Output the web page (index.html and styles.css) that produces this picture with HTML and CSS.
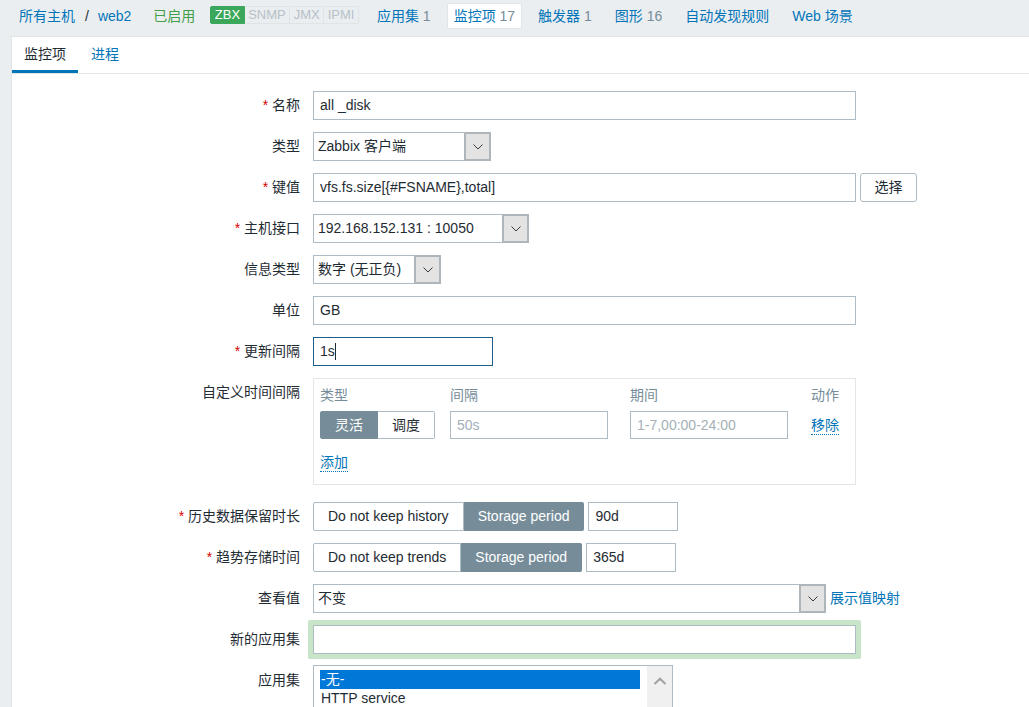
FILE: index.html
```html
<!DOCTYPE html>
<html lang="zh-CN">
<head>
<meta charset="utf-8">
<title>监控项</title>
<link rel="stylesheet" href="styles.css">
</head>
<body>
<header class="nav">
  <div class="crumbs"><a href="#">所有主机</a><span class="sep">/</span><a href="#">web2</a></div>
  <span class="status-on">已启用</span>
  <span class="badges"><span class="badge on">ZBX</span><span class="badge">SNMP</span><span class="badge">JMX</span><span class="badge">IPMI</span></span>
  <ul class="top-tabs">
    <li><a href="#">应用集</a> <span class="count">1</span></li>
    <li class="sel"><a href="#">监控项</a> <span class="count">17</span></li>
    <li><a href="#">触发器</a> <span class="count">1</span></li>
    <li><a href="#">图形</a> <span class="count">16</span></li>
    <li><a href="#">自动发现规则</a></li>
    <li><a href="#">Web 场景</a></li>
  </ul>
</header>
<main class="page">
  <ul class="tabs">
    <li class="active">监控项</li>
    <li><a href="#">进程</a></li>
  </ul>
  <div class="form">
    <div class="label req">名称</div>
    <div class="field"><div class="input wide">all _disk</div></div>

    <div class="label">类型</div>
    <div class="field"><div class="select w-type"><span class="val">Zabbix 客户端</span><span class="arrow"><svg width="10" height="6" viewBox="0 0 10 6"><path d="M0.5 0.5 L5 5 L9.5 0.5" fill="none" stroke="#3a3a3a" stroke-width="1"/></svg></span></div></div>

    <div class="label req">键值</div>
    <div class="field"><div class="input wide">vfs.fs.size[{#FSNAME},total]</div><span class="btn">选择</span></div>

    <div class="label req">主机接口</div>
    <div class="field"><div class="select w-iface"><span class="val">192.168.152.131 : 10050</span><span class="arrow"><svg width="10" height="6" viewBox="0 0 10 6"><path d="M0.5 0.5 L5 5 L9.5 0.5" fill="none" stroke="#3a3a3a" stroke-width="1"/></svg></span></div></div>

    <div class="label">信息类型</div>
    <div class="field"><div class="select w-info"><span class="val">数字 (无正负)</span><span class="arrow"><svg width="10" height="6" viewBox="0 0 10 6"><path d="M0.5 0.5 L5 5 L9.5 0.5" fill="none" stroke="#3a3a3a" stroke-width="1"/></svg></span></div></div>

    <div class="label">单位</div>
    <div class="field"><div class="input wide">GB</div></div>

    <div class="label req">更新间隔</div>
    <div class="field"><div class="input focus w-delay">1s<span class="caret"></span></div></div>

    <div class="label">自定义时间间隔</div>
    <div class="field"><div class="intervals">
      <div class="iv-grid">
        <div class="iv-head">类型</div>
        <div class="iv-head">间隔</div>
        <div class="iv-head">期间</div>
        <div class="iv-head">动作</div>
        <div class="iv-cell"><div class="seg small"><span class="on">灵活</span><span>调度</span></div></div>
        <div class="iv-cell"><div class="input iv-input ph">50s</div></div>
        <div class="iv-cell"><div class="input iv-input ph">1-7,00:00-24:00</div></div>
        <div class="iv-cell"><a href="#" class="dotted">移除</a></div>
      </div>
      <div class="iv-add"><a href="#" class="dotted">添加</a></div>
    </div></div>

    <div class="label req">历史数据保留时长</div>
    <div class="field"><div class="seg"><span>Do not keep history</span><span class="on">Storage period</span></div><div class="input w-period">90d</div></div>

    <div class="label req">趋势存储时间</div>
    <div class="field"><div class="seg"><span>Do not keep trends</span><span class="on">Storage period</span></div><div class="input w-period">365d</div></div>

    <div class="label">查看值</div>
    <div class="field"><div class="select w-valuemap"><span class="val">不变</span><span class="arrow"><svg width="10" height="6" viewBox="0 0 10 6"><path d="M0.5 0.5 L5 5 L9.5 0.5" fill="none" stroke="#3a3a3a" stroke-width="1"/></svg></span></div><a href="#" class="side-link">展示值映射</a></div>

    <div class="label">新的应用集</div>
    <div class="field"><div class="input wide glow"></div></div>

    <div class="label">应用集</div>
    <div class="field"><div class="listbox">
      <div class="options">
        <div class="opt selected">-无-</div>
        <div class="opt">HTTP service</div>
      </div>
      <div class="scroll"><svg width="14" height="8" viewBox="0 0 14 8"><path d="M1.5 7 L7 1.8 L12.5 7" fill="none" stroke="#a3a3a3" stroke-width="2.2"/></svg></div>
    </div></div>
  </div>
</main>
</body>
</html>
```
FILE: styles.css
```css
* { box-sizing: border-box; }
html, body { overflow: hidden; height: 100%; }
body {
  margin: 0;
  background: #ebeef1;
  font-family: "Liberation Sans", Arial, "Noto Sans CJK SC", sans-serif;
  font-size: 14px;
  color: #1f2c33;
}
a { color: #0275b8; text-decoration: none; }

/* top navigation */
.nav {
  height: 36px;
  display: flex;
  align-items: flex-start;
  padding-top: 3px;
  white-space: nowrap;
}
.crumbs { margin-left: 19px; display: flex; line-height: 26px; }
.sep { margin: 0 9px 0 10px; }
.status-on { margin-left: 22px; line-height: 26px; color: #429e47; }
.badges {
  margin-left: 15px;
  margin-top: 3px;
  display: flex;
  height: 18px;
  font-size: 13px;
  line-height: 16px;
}
.badge {
  padding: 0 3.5px;
  color: #b6c1c8;
  border: 1px solid #dfe4e7;
  border-left: none;
}
.badge.on {
  background: #3aa75a;
  border: 1px solid #3aa75a;
  color: #fff;
  border-radius: 2px 0 0 2px;
}
.badge:last-child { border-radius: 0 2px 2px 0; }
.top-tabs {
  list-style: none;
  margin: 0 0 0 11px;
  padding: 0;
  display: flex;
  gap: 9px;
}
.top-tabs li {
  height: 26px;
  line-height: 24px;
  padding: 0 6px;
  border: 1px solid transparent;
  border-radius: 2px;
}
.top-tabs li.sel { background: #fff; border-color: #dfe4e7; }
.count { color: #768d99; }

/* page */
.page {
  margin-left: 11px;
  height: calc(100% - 36px);
  background: #fff;
  border-left: 1px solid #dfe4e7;
  border-top: 1px solid #dfe4e7;
}
.tabs {
  list-style: none;
  margin: 0;
  padding: 0;
  display: flex;
  border-bottom: 1px solid #dfe4e7;
}
.tabs li {
  height: 36px;
  padding: 2px 12px 0;
  line-height: 31px;
  border-bottom: 3px solid transparent;
}
.tabs li.active { border-bottom-color: #0275b8; color: #1f2c33; }
.tabs li + li { padding-left: 13px; }

/* form */
.form {
  display: grid;
  grid-template-columns: 288px 1fr;
  column-gap: 13px;
  row-gap: 12px;
  padding-top: 17px;
}
.label { text-align: right; line-height: 29px; white-space: nowrap; }
.req::before { content: "* "; color: #d40000; }
.field { display: flex; align-items: flex-start; }

.input {
  height: 29px;
  border: 1px solid #acbbc4;
  background: #fff;
  padding: 0 6px;
  line-height: 27px;
  white-space: nowrap;
  overflow: hidden;
}
.wide { width: 543px; }
.w-delay { width: 180px; }
.w-period { width: 90px; margin-left: 4px; }
.focus { border-color: #1f5e8a; }
.caret {
  display: inline-block;
  width: 1px;
  height: 17px;
  background: #1f2c33;
  vertical-align: -4px;
}
.glow { box-shadow: 0 0 0 5px #c8e4c9; border-radius: 0.5px; }

.btn {
  margin-left: 4px;
  height: 29px;
  width: 57px;
  border: 1px solid #acbbc4;
  border-radius: 3px;
  text-align: center;
  line-height: 27px;
  background: #fff;
}

.select {
  display: flex;
  height: 29px;
  border: 1px solid #acbbc4;
  background: #fff;
}
.select .val { flex: 1; padding-left: 4px; line-height: 27px; white-space: nowrap; }
.select .arrow {
  width: 27px;
  margin: -1px -1px -1px 0;
  border: 2px solid #aeb6bb;
  background: #e3e3e3;
  display: flex;
  align-items: center;
  justify-content: center;
}
.w-type { width: 178px; }
.w-iface { width: 216px; }
.w-info { width: 128px; }
.w-valuemap { width: 513px; }
.side-link { margin-left: 4px; line-height: 29px; }

/* custom intervals */
.intervals {
  width: 543px;
  border: 1px solid #e2e6e9;
  padding: 6px 6px 12px;
  margin-bottom: 5px;
}
.iv-grid {
  display: grid;
  grid-template-columns: 130px 180px 181px auto;
  row-gap: 6px;
}
.iv-head { color: #768d99; line-height: 20px; }
.iv-cell { display: flex; align-items: center; height: 28px; }
.iv-input { width: 158px; height: 28px; line-height: 26px; }
.ph { color: #a4b0b7; }
.dotted {
  display: inline-block;
  line-height: 18px;
  border-bottom: 1px dotted #0275b8;
}
.iv-add { margin-top: 14px; height: 19px; }

.seg { display: flex; height: 29px; }
.seg span {
  padding: 0 14px;
  border: 1px solid #acbbc4;
  background: #fff;
  line-height: 27px;
  white-space: nowrap;
}
.seg span:first-child { border-radius: 2px 0 0 2px; }
.seg span:last-child { border-left: none; border-radius: 0 2px 2px 0; }
.seg span.on { background: #768d99; border-color: #768d99; color: #fff; }
.seg.small { height: 28px; }
.seg.small span { line-height: 26px; }

/* listbox */
.listbox {
  width: 360px;
  height: 110px;
  border: 1px solid #acbbc4;
  margin-top: -1px;
  display: flex;
}
.options { flex: 1; padding: 4px 7px 0 6px; }
.opt { line-height: 19px; padding-left: 1px; white-space: nowrap; }
.opt.selected { background: #0078d7; color: #fff; }
.scroll {
  width: 25px;
  background: #f0f0f0;
  display: flex;
  justify-content: center;
  align-items: flex-start;
  padding-top: 11px;
}
```
